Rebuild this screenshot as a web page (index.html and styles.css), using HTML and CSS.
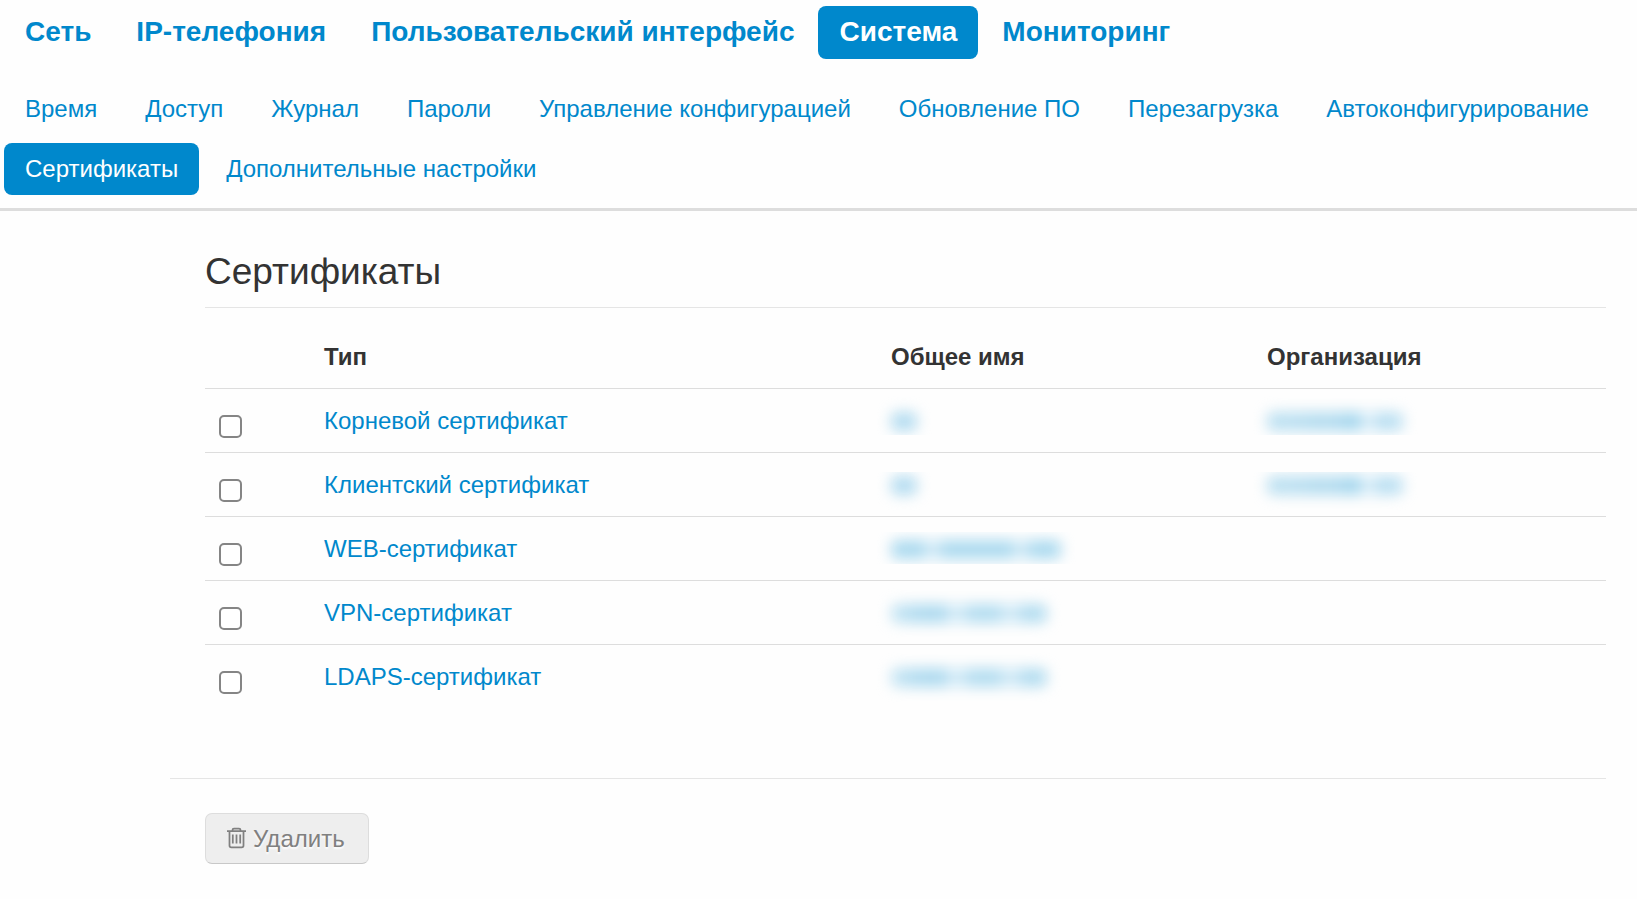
FILE: index.html
```html
<!DOCTYPE html>
<html lang="ru">
<head>
<meta charset="utf-8">
<meta name="viewport" content="width=device-width, initial-scale=1">
<title>Сертификаты</title>
<link rel="stylesheet" href="styles.css">
</head>
<body>
<header class="header">
  <nav class="nav nav-main">
    <a href="#">Сеть</a>
    <a href="#">IP-телефония</a>
    <a href="#">Пользовательский интерфейс</a>
    <a href="#" class="active" aria-current="true">Система</a>
    <a href="#">Мониторинг</a>
  </nav>
  <nav class="nav nav-sub">
    <a href="#">Время</a>
    <a href="#">Доступ</a>
    <a href="#">Журнал</a>
    <a href="#">Пароли</a>
    <a href="#">Управление конфигурацией</a>
    <a href="#">Обновление ПО</a>
    <a href="#">Перезагрузка</a>
    <a href="#">Автоконфигурирование</a>
    <a href="#" class="active" aria-current="page">Сертификаты</a>
    <a href="#">Дополнительные настройки</a>
  </nav>
</header>
<main class="content">
  <form>
    <section class="panel">
      <h1 class="title">Сертификаты</h1>
      <table class="certs">
        <colgroup>
          <col class="col-check">
          <col class="col-type">
          <col class="col-name">
          <col class="col-org">
        </colgroup>
        <thead>
          <tr><th></th><th scope="col">Тип</th><th scope="col">Общее имя</th><th scope="col">Организация</th></tr>
        </thead>
        <tbody>
          <tr>
            <td><input type="checkbox" aria-labelledby="cert-root"></td>
            <td><a href="#" id="cert-root">Корневой сертификат</a></td>
            <td><span class="masked cut-bottom"><span class="smear smear-short"></span></span></td>
            <td><span class="masked cut-bottom"><span class="smear smear-org"></span></span></td>
          </tr>
          <tr>
            <td><input type="checkbox" aria-labelledby="cert-client"></td>
            <td><a href="#" id="cert-client">Клиентский сертификат</a></td>
            <td><span class="masked cut-top"><span class="smear smear-short"></span></span></td>
            <td><span class="masked cut-top"><span class="smear smear-org"></span></span></td>
          </tr>
          <tr>
            <td><input type="checkbox" aria-labelledby="cert-web"></td>
            <td><a href="#" id="cert-web">WEB-сертификат</a></td>
            <td><span class="masked cut-both"><span class="smear smear-address"></span></span></td>
            <td></td>
          </tr>
          <tr>
            <td><input type="checkbox" aria-labelledby="cert-vpn"></td>
            <td><a href="#" id="cert-vpn">VPN-сертификат</a></td>
            <td><span class="masked"><span class="smear smear-ca"></span></span></td>
            <td></td>
          </tr>
          <tr>
            <td><input type="checkbox" aria-labelledby="cert-ldaps"></td>
            <td><a href="#" id="cert-ldaps">LDAPS-сертификат</a></td>
            <td><span class="masked"><span class="smear smear-ca"></span></span></td>
            <td></td>
          </tr>
        </tbody>
      </table>
    </section>
    <div class="actions">
      <button type="button" class="btn" disabled>
        <svg class="icon" viewBox="0 0 20 22" aria-hidden="true">
          <path d="M0 4h19M5.5 4V3q0-1.500 1.500-1.500h5q1.500 0 1.500 1.500v1M2.500 4v14.500q0 1.800 1.800 1.800h10.400q1.800 0 1.800-1.800V4M5.800 7.500v9M9.500 7.500v9M13.200 7.500v9"/>
        </svg>
        <span>Удалить</span>
      </button>
    </div>
  </form>
</main>
</body>
</html>
```
FILE: styles.css
```css
* {
  box-sizing: border-box;
}

body {
  margin: 0;
  background: #fefefe;
  color: #333;
  font-family: "Liberation Sans", Arial, sans-serif;
  font-size: 24px;
  line-height: 35px;
}

a {
  color: #08c;
  text-decoration: none;
}

.header {
  padding: 6px 4px 13px;
  border-bottom: 3px solid #ddd;
}

.nav {
  display: flex;
  flex-wrap: wrap;
  gap: 8px 3px;
}

.nav a {
  padding: 8px 21px 9px;
  border-radius: 8px;
}

.nav .active {
  background: #08c;
  color: #fff;
}

.nav-main {
  margin-bottom: 24px;
  font-size: 28px;
  font-weight: bold;
}

.nav-main a {
  padding: 8px 21px 10px;
}

.nav-sub {
  column-gap: 6px;
}

.content {
  padding: 35px 31px 35px 170px;
}

.panel {
  padding-left: 35px;
}

.title {
  margin: 0 0 24px;
  padding: 8px 0 18px;
  border-bottom: 1px solid #e5e5e5;
  font-size: 37px;
  font-weight: normal;
  line-height: 35px;
}

.certs {
  width: 100%;
  border-collapse: collapse;
  table-layout: fixed;
}

.certs th,
.certs td {
  height: 64px;
  padding: 14px;
  text-align: left;
  vertical-align: top;
}

.certs td {
  border-top: 1px solid #ddd;
}

.certs th {
  padding-top: 7px;
  height: 56px;
}

.col-check {
  width: 105px;
}

.col-type {
  width: 567px;
}

.col-name {
  width: 376px;
}

.certs input {
  appearance: none;
  display: block;
  width: 23px;
  height: 23px;
  margin: 12px 0 0;
  border: 2px solid #858585;
  border-radius: 5px;
  background: #fff;
}

.certs input:checked {
  border-color: #08c;
  background: #08c;
  box-shadow: inset 0 0 0 3px #fff;
}

.masked {
  display: block;
  height: 35px;
  padding-top: 9px;
}

.cut-bottom {
  clip-path: inset(-14px -14px 3px);
}

.cut-top {
  clip-path: inset(5px -14px -14px);
}

.cut-both {
  clip-path: inset(1px -14px 2px);
}

.smear {
  display: block;
  height: 19px;
  border-radius: 6px;
  filter: blur(7px);
}

.smear-short {
  width: 26px;
  background: #b4dcf0;
}

.smear-org {
  width: 136px;
  background: linear-gradient(90deg, #bce0f1 0 20%, #b4dcef 35% 50%, #a6d7ee 60% 68%, #e4f2fa 72% 76%, #bce0f2 80%);
}

.smear-address {
  width: 170px;
  background: linear-gradient(90deg, #acdaef 0 18%, #d4ebf7 22% 26%, #acdaef 32% 70%, #d4ebf7 74% 77%, #acdaef 84%);
}

.smear-ca {
  width: 156px;
  background: linear-gradient(90deg, #c8e6f4 0, #aedaef 20% 34%, #d4ebf7 38% 44%, #b4ddf0 52% 68%, #d4ebf7 74% 78%, #b4ddf0 86%);
}

.actions {
  margin-top: 69px;
  padding: 34px 35px 0;
  border-top: 1px solid #e5e5e5;
}

.btn {
  display: inline-flex;
  align-items: center;
  gap: 6px;
  padding: 7px 23px 7px 21px;
  border: 1px solid #ddd;
  border-bottom-color: #c8c8c8;
  border-radius: 7px;
  background: #eee;
  color: #808080;
  font: inherit;
  text-shadow: 0 2px 2px #fff;
}

.icon {
  width: 20px;
  height: 22px;
  fill: none;
  stroke: currentColor;
  stroke-width: 1.75;
}
```
